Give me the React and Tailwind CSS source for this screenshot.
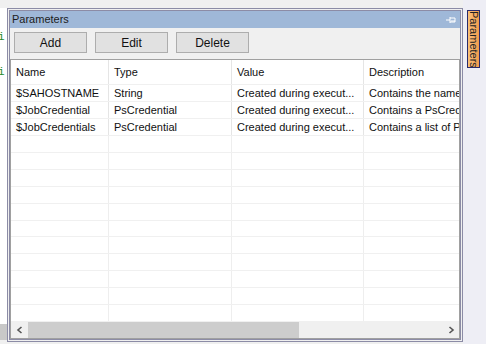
import React from "react";

const cols = [
  { w: 98, label: "Name" },
  { w: 123, label: "Type" },
  { w: 132, label: "Value" },
  { w: 100, label: "Description" },
];

const rows = [
  ["$SAHOSTNAME", "String", "Created during execut...", "Contains the name"],
  ["$JobCredential", "PsCredential", "Created during execut...", "Contains a PsCrede"],
  ["$JobCredentials", "PsCredential", "Created during execut...", "Contains a list of Ps"],
];

export default function App() {
  const empty = Array.from({ length: 11 });
  return (
    <div
      className="w-[486px] h-[344px] bg-[#f0f0f0] flex overflow-hidden text-[11px] text-[#111]"
      style={{ fontFamily: '"Liberation Sans", Arial, sans-serif' }}
    >
      {/* editor behind on the left */}
      <div className="w-[7px] flex flex-col bg-white">
        <div className="h-[8px] bg-[#f0f0f0]" />
        <div className="h-[22px]" />
        <div className="text-[#2a8a2a] font-mono text-[11px] leading-[14px] -ml-[2px]">i</div>
        <div className="h-[21px]" />
        <div className="text-[#2a8a2a] font-mono text-[11px] leading-[14px] -ml-[2px]">i</div>
        <div className="flex-1" />
        <div className="h-[16px] bg-[#c8c8c8]" />
        <div className="h-[4px] bg-[#f0f0f0]" />
      </div>

      {/* panel */}
      <div className="mt-[8px] w-[456px] h-[334px] border-[3px] border-double border-[#8c8ca6] flex flex-col bg-[#f0f0f0]">
        <div className="h-[17px] bg-[#9fb8d8] flex items-center justify-between pl-[2px] pr-[4px]">
          <span className="leading-none text-[#1c1c1c]">Parameters</span>
          <svg width="10" height="8" viewBox="0 0 10 8">
            <path d="M0 4H4M4 1V7M4 2H9V6H4M5 5H9" stroke="#fff" strokeWidth="1" fill="none" />
          </svg>
        </div>
        <div className="flex gap-[8px] pl-[4px] pt-[4px] h-[31px]">
          {["Add", "Edit", "Delete"].map((b) => (
            <div
              key={b}
              className="w-[73px] h-[21px] bg-[#e1e1e1] border border-[#adadad] flex items-center justify-center text-[12px]"
            >
              {b}
            </div>
          ))}
        </div>
        <div className="flex-1 border border-[#a0a0a0] bg-white flex flex-col overflow-hidden">
          <div className="flex h-[25px] border-b border-[#f0f0f0]">
            {cols.map((c) => (
              <div
                key={c.label}
                className="flex items-center pl-[5px] border-r border-[#e5e5e5] shrink-0"
                style={{ width: c.w }}
              >
                {c.label}
              </div>
            ))}
          </div>
          {rows.map((r, ri) => (
            <div key={ri} className="flex h-[17px] border-b border-[#f0f0f0]">
              {r.map((t, i) => (
                <div
                  key={i}
                  className="flex items-center pl-[5px] border-r border-[#e5e5e5] shrink-0 overflow-hidden whitespace-nowrap"
                  style={{ width: cols[i].w }}
                >
                  {t}
                </div>
              ))}
            </div>
          ))}
          {empty.map((_, ri) => (
            <div key={ri} className="flex h-[17px] border-b border-[#f0f0f0]">
              {cols.map((c, i) => (
                <div key={i} className="border-r border-[#eeeeee] shrink-0" style={{ width: c.w }} />
              ))}
            </div>
          ))}
          <div className="flex-1" />
          <div className="h-[16px] flex bg-[#f0f0f0]">
            <div className="w-[17px] flex items-center justify-center">
              <svg width="8" height="8" viewBox="0 0 8 8">
                <path d="M5.5 1L2 4L5.5 7" stroke="#555" strokeWidth="1.6" fill="none" />
              </svg>
            </div>
            <div className="w-[271px] bg-[#cdcdcd]" />
            <div className="flex-1" />
            <div className="w-[17px] flex items-center justify-center">
              <svg width="8" height="8" viewBox="0 0 8 8">
                <path d="M2.5 1L6 4L2.5 7" stroke="#555" strokeWidth="1.6" fill="none" />
              </svg>
            </div>
          </div>
        </div>
      </div>

      {/* right dock strip */}
      <div className="flex-1 bg-[#eeeef5] pt-[10px] pl-[4px]">
        <div className="w-[13px] h-[58px] border border-[#2b2b6b] bg-gradient-to-r from-[#f9c27c] to-[#f39a4a] flex items-center justify-center overflow-hidden">
          <span className="[writing-mode:vertical-rl] text-[11px] leading-none text-[#222]">Parameters</span>
        </div>
      </div>
    </div>
  );
}
